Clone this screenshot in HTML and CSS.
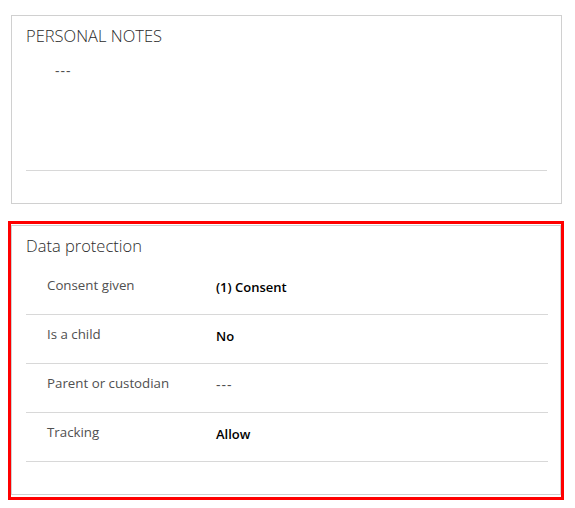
FILE: index.html
```html
<!DOCTYPE html>
<html lang="en">
<head>
<meta charset="utf-8">
<title>Contact sections</title>
<link rel="stylesheet" href="styles.css">
</head>
<body>
<div class="page">
  <section class="card notes">
    <h2 class="card-title">PERSONAL NOTES</h2>
    <div class="notes-value">---</div>
    <div class="notes-rule"></div>
  </section>

  <div class="highlight">
    <section class="card dp">
      <h2 class="card-title">Data protection</h2>
      <div class="rows">
        <div class="row">
          <span class="label">Consent given</span>
          <span class="value strong">(1) Consent</span>
        </div>
        <div class="row">
          <span class="label">Is a child</span>
          <span class="value strong">No</span>
        </div>
        <div class="row">
          <span class="label">Parent or custodian</span>
          <span class="value empty">---</span>
        </div>
        <div class="row">
          <span class="label">Tracking</span>
          <span class="value strong">Allow</span>
        </div>
      </div>
    </section>
  </div>
</div>
</body>
</html>
```

FILE: styles.css
```css
* {
  box-sizing: border-box;
}

html, body {
  margin: 0;
  padding: 0;
  background: #ffffff;
}

body {
  font-family: "Open Sans", "Noto Sans", "Liberation Sans", sans-serif;
  color: #333333;
}

.page {
  display: flex;
  flex-direction: column;
  align-items: flex-start;
  padding-top: 15px;
}

.card {
  border: 1px solid #d0d0d0;
  background: #ffffff;
}

.card-title {
  margin: 0;
  font-size: 16.5px;
  line-height: 22px;
  font-weight: 300;
  color: #2b2b2b;
}

/* Personal notes */
.notes {
  margin-left: 11px;
  width: 551px;
  height: 189px;
  padding: 9px 14px 0 14px;
}

.notes-value {
  margin: 14px 0 0 29px;
  font-size: 14px;
  line-height: 20px;
  letter-spacing: 1px;
  color: #505050;
}

.notes-rule {
  margin-top: 89px;
  height: 1px;
  background: #d8d8d8;
}

/* Highlighted data protection */
.highlight {
  margin-top: 17px;
  margin-left: 8px;
  width: 556px;
  height: 279px;
  border: 3px solid #ff0000;
  padding: 1px 0 2px 0;
}

.dp {
  height: 270px;
  padding: 9px 12px 0 14px;
}

.rows {
  margin-top: 9px;
  display: flex;
  flex-direction: column;
}

.row {
  display: flex;
  align-items: flex-start;
  height: 49px;
  padding-top: 10px;
  border-bottom: 1px solid #d8d8d8;
}

.label {
  width: 190px;
  padding-left: 21px;
  font-size: 13.3px;
  line-height: 18px;
  color: #505050;
}

.value {
  padding-top: 2px;
  font-size: 13px;
  line-height: 18px;
}

.strong {
  font-weight: 600;
  color: #000000;
}

.empty {
  color: #505050;
  font-size: 14px;
  letter-spacing: 1px;
}
```
